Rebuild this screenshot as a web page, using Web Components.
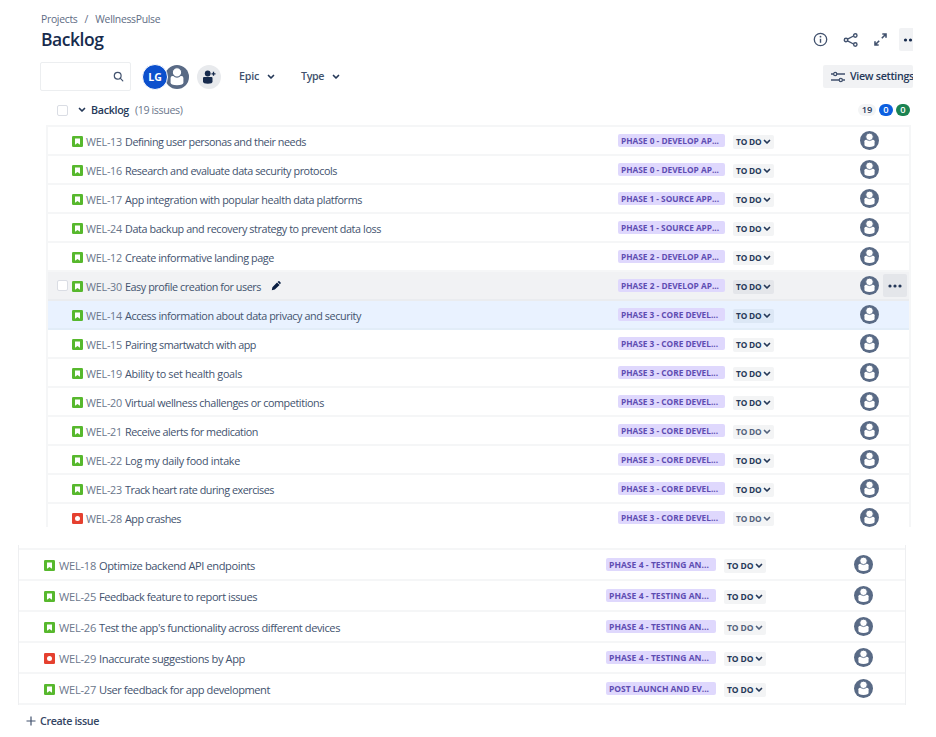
<!DOCTYPE html>
<html lang="en">
<head>
<meta charset="utf-8">
<title>Backlog</title>
<style>
html,body{margin:0;background:#fff}
body{width:936px;height:737px;overflow:hidden;font-family:"Open Sans","Noto Sans",sans-serif;color:#42526e}
</style>
</head>
<body>
<backlog-page></backlog-page>
<script>
const define=(name,html,after)=>{
  const t=document.createElement('template');
  t.innerHTML=html;
  customElements.define(name,class extends HTMLElement{
    connectedCallback(){
      if(this.shadowRoot)return;
      this.attachShadow({mode:'open'}).append(t.content.cloneNode(true));
      if(after)after(this,this.shadowRoot);
    }
  });
};

/* One line of text, tracked so that it fills the width given in "w". */
define('fit-text',`<style>:host{display:block;white-space:pre;flex:none}span{display:inline-block}</style><span><slot></slot></span>`,(el,r)=>{
  const s=r.querySelector('span'),w=+el.getAttribute('w');
  const n=el.textContent.length;
  el.style.width=w+'px';
  s.style.letterSpacing=((w-s.getBoundingClientRect().width)/n).toFixed(4)+'px';
});

define('user-avatar',`<style>:host{display:block;width:var(--s,19px);height:var(--s,19px);flex:none}svg{display:block;width:100%;height:100%}</style>
<svg viewBox="0 0 24 24"><circle cx="12" cy="12" r="12" fill="#596a85"/><path d="M5.600 13q0-1.900 1.900-1.900h9q1.900 0 1.900 1.900v4.500q0 2.700-6.400 2.700t-6.400-2.700z" fill="#fff"/><circle cx="12" cy="7.400" r="4.700" fill="#fff" stroke="#596a85" stroke-width="1.100"/></svg>`);

define('type-icon',`<style>:host{display:block;width:11px;height:11px;flex:none}svg{display:block}.b{display:none}:host([kind=bug]) .b{display:block}:host([kind=bug]) .s{display:none}</style>
<svg class="s" width="11" height="11" viewBox="0 0 11 11"><rect width="11" height="11" rx="1.300" fill="#57b82d"/><path d="M3 2.500h5v6.200L5.500 6.900 3 8.700z" fill="#fff"/></svg>
<svg class="b" width="11" height="11" viewBox="0 0 11 11"><rect width="11" height="11" rx="1.300" fill="#e5402f"/><circle cx="5.500" cy="5.500" r="2.500" fill="#fff"/></svg>`);

define('check-box',`<style>:host{display:block;box-sizing:border-box;width:11px;height:11px;border:1px solid #dadde4;border-radius:2px;background:#fff;flex:none}</style>`);

define('chevron-icon',`<style>:host{display:block;flex:none;width:8px;height:6px}svg{display:block}</style><svg width="8" height="6" viewBox="0 0 8 6"><path d="M1.500 1.500 4 4l2.500-2.500" fill="none" stroke="currentColor" stroke-width="1.700" stroke-linecap="round" stroke-linejoin="round"/></svg>`);

define('issue-row',`<style>
:host{display:flex;box-sizing:border-box;height:var(--row,29px);border-bottom:var(--line,2px) solid #f5f6f7;position:relative;font-size:var(--fs,10.800px);align-items:center}
:host([hover]){background:#f1f2f4;border-color:#eaecef}
:host([selected]){background:#e9f2ff;border-color:#e2edf8}
.sel{width:var(--lead,24px);display:flex;justify-content:flex-end;padding-right:4px;box-sizing:border-box;flex:none}
.main{display:flex;flex:1;align-items:center;min-width:0;padding-top:1px}
.main type-icon{margin-right:var(--ig,3px)}
.key{color:#6b778c;margin-right:3px}
svg{display:block}
.pen{margin-left:10px}
.epic{box-sizing:border-box;width:var(--ew,107px);height:13px;border-radius:2px;background:#dfd8fd;color:#5e4db2;font:700 var(--es,8.300px)/13px "Open Sans",sans-serif;padding-left:3px;flex:none;display:block}
.status{box-sizing:border-box;width:var(--sw,41px);height:14px;border-radius:2px;background:#f3f4f5;color:#253858;font:700 var(--es,8.300px)/14px "Open Sans",sans-serif;padding-left:3px;margin:2px 0 0 var(--sg,8px);display:flex;align-items:center;flex:none}
.status chevron-icon{margin-left:1px}
:host([hover]) .status{background:#e4e6ea}:host([selected]) .status{background:#dce7f5}
:host([muted]) .status{color:#52617b}
user-avatar{margin-left:var(--ag,86px)}
.tail{width:var(--tail,30px);flex:none;display:flex;padding-left:4px;box-sizing:border-box}
.more{width:24px;height:23px;border-radius:2px;background:#e4e6ea;display:flex;align-items:center;justify-content:center}
</style>
<div class="sel"></div><div class="main"></div><div class="epic"></div><div class="status"></div><user-avatar></user-avatar><div class="tail"></div>`,(el,r)=>{
  const a=n=>el.getAttribute(n),big=el.hasAttribute('big');
  const q=s=>r.querySelector(s);
  q('.main').innerHTML=`<type-icon kind="${a('kind')||'story'}"></type-icon><fit-text class="key" w="${big?37:36}">${a('key')}</fit-text><fit-text w="${a('w')}">${a('label')}</fit-text>`;
  q('.epic').innerHTML=`<fit-text w="${a('ew')}">${a('epic')}</fit-text>`;
  q('.status').innerHTML=`<fit-text w="${big?26.5:25.5}">TO DO</fit-text><chevron-icon></chevron-icon>`;
  if(el.hasAttribute('hover')){
    q('.sel').innerHTML='<check-box></check-box>';
    q('.main').insertAdjacentHTML('beforeend','<svg class="pen" width="10" height="10" viewBox="0 0 10 10"><path d="M.8 9.200l.6-3L6 1.400l2.600 2.600-4.800 4.600zM6.600 1l.8-.7q.5-.4 1 0l1.200 1.200q.4.5 0 1l-.7.8z" fill="#091e42"/></svg>');
    q('.tail').innerHTML='<div class="more"><svg width="14" height="4"><g fill="#253858"><circle cx="2" cy="2" r="1.600"/><circle cx="7" cy="2" r="1.600"/><circle cx="12" cy="2" r="1.600"/></g></svg></div>';
  }
});

define('issue-list',`<style>
:host{display:block;box-sizing:border-box;width:865px;height:402px;margin-left:46px;overflow:hidden;border:2px solid #f5f6f7;border-bottom:0}
:host([second]){width:888px;height:160px;margin:18px 0 0 18px;border-width:0 1px;border-color:#eeeff1;--row:31px;--line:2px;--lead:25px;--ig:4px;--fs:11.100px;--ew:110px;--es:8.500px;--sw:42px;--ag:88px;--tail:32px}
.top{display:none}:host([second]) .top{display:block;height:3px;border-bottom:2px solid #f5f6f7}
</style><div class="top"></div><slot></slot>`);

define('page-header',`<style>
:host{display:block;width:913px;height:99px;overflow:hidden}
.crumbs{display:flex;font-size:10.400px;line-height:14px;padding:12px 0 0 41px;color:#5e6c84}
.title{display:flex;height:27px;padding-left:41px;align-items:center;font:600 17.500px/27px "Open Sans",sans-serif;color:#172b4d}
.actions{margin-left:auto;display:flex;align-items:center}
.bar{display:flex;align-items:center;height:47px;padding-left:40px;font:600 10.700px/15px "Open Sans",sans-serif}
.bar chevron-icon{color:#253858}
svg{display:block;flex:none}
.search{box-sizing:border-box;width:91px;height:29px;border:1px solid #eceef0;border-radius:2px;display:flex;align-items:center;justify-content:flex-end;padding-right:6px}
.me{box-sizing:border-box;width:26px;height:26px;border-radius:50%;background:#0c50cd;color:#fff;font:700 10.500px/24px "Open Sans",sans-serif;text-align:center;margin-left:11px;border:1px solid #fff;position:relative;z-index:1}
.av{--s:24px;margin-left:-3px}
.add{width:24px;height:24px;border-radius:50%;background:#e8eaed;margin-left:8px;display:grid;place-items:center}
.more{width:14px;height:23px;background:#f1f2f4;margin-left:12px;padding-left:4px;box-sizing:border-box;display:flex;align-items:center;border-radius:2px 0 0 2px;overflow:hidden}
.view{margin-left:auto;width:90px;height:23px;background:#f1f2f4;border-radius:2px;display:flex;align-items:center;padding-left:8px;box-sizing:border-box;color:#253858;overflow:hidden}
</style>
<div class="crumbs"><fit-text w="36.500">Projects</fit-text><span style="margin:0 7px">/</span><fit-text w="65">WellnessPulse</fit-text></div>
<div class="title"><fit-text w="62.500">Backlog</fit-text><div class="actions">
<svg width="15" height="15" viewBox="0 0 15 15"><circle cx="7.500" cy="7.500" r="6.200" fill="none" stroke="#42526e" stroke-width="1.300"/><circle cx="7.500" cy="4.700" r=".9" fill="#42526e"/><path d="M7.500 6.800v4" stroke="#42526e" stroke-width="1.400"/></svg>
<svg style="margin-left:15px" width="16" height="14" viewBox="0 0 16 14" fill="none" stroke="#42526e" stroke-width="1.400"><path d="M4.500 6.200 10.500 3M4.500 7.800 10.500 11"/><circle cx="3" cy="7" r="1.700"/><circle cx="12.300" cy="2.500" r="1.700"/><circle cx="12.300" cy="11.500" r="1.700"/></svg>
<svg style="margin-left:15px" width="13" height="13" viewBox="0 0 13 13" fill="none" stroke="#42526e" stroke-width="1.600"><path d="M7.800 5.200 12 1M8.300 1H12v3.700M5.200 7.800 1 12M1 8.300V12h3.700"/></svg>
<div class="more"><svg width="14" height="4"><g fill="#172b4d"><circle cx="2.500" cy="2" r="1.600"/><circle cx="7.500" cy="2" r="1.600"/></g></svg></div></div></div>
<div class="bar"><div class="search"><svg width="11" height="11" viewBox="0 0 11 11" fill="none" stroke="#42526e" stroke-width="1.200"><circle cx="4.700" cy="4.700" r="3.400"/><path d="m7.200 7.200 2.600 2.600" stroke-linecap="round"/></svg></div>
<div class="me">LG</div><user-avatar class="av"></user-avatar>
<div class="add"><svg width="14" height="14" viewBox="0 0 14 14" fill="#172b4d"><circle cx="5.700" cy="3.500" r="2.900"/><path d="M1 8q0-1 1-1h7.500q1 0 1 1v3.500q0 2.200-4.700 2.200T1 11.500z"/><path d="M11.500 1.800v4M9.500 3.800h4" stroke="#172b4d" stroke-width="1.300"/></svg></div>
<fit-text w="20" style="margin-left:18px">Epic</fit-text><chevron-icon style="margin-left:8px"></chevron-icon>
<fit-text w="23" style="margin-left:26px">Type</fit-text><chevron-icon style="margin-left:8px"></chevron-icon>
<div class="view"><svg width="14" height="12" viewBox="0 0 14 12" fill="none" stroke="#42526e" stroke-width="1.300"><path d="M0 3h2.500M6 3h8M0 9h8M11.500 9H14"/><circle cx="4.200" cy="3" r="1.600"/><circle cx="9.800" cy="9" r="1.600"/></svg><fit-text w="64" style="margin-left:5px">View settings</fit-text></div></div>`);

define('section-header',`<style>
:host{display:flex;height:26px;align-items:center;padding:0 26px 4px 57px;font-size:10.700px;box-sizing:border-box}
b{display:block;font-weight:600;color:#253858}
chevron-icon{color:#253858}
.c{margin-left:6px;color:#6b778c}
.p{height:12px;border-radius:6px;font:600 9.300px/12px "Open Sans",sans-serif;text-align:center;width:14px;margin-left:3px;color:#fff}
</style><check-box></check-box><chevron-icon style="margin-left:10px"></chevron-icon>
<b style="margin-left:5px"><fit-text w="38">Backlog</fit-text></b><fit-text class="c" w="47.500">(19 issues)</fit-text>
<div class="p" style="margin-left:auto;width:18px;background:#f3f4f5;color:#253858">19</div><div class="p" style="background:#0c5fe0">0</div><div class="p" style="background:#1b8352">0</div>`);

define('create-issue',`<style>:host{display:flex;align-items:center;margin:8px 0 0 26px;font:600 10.700px/16px "Open Sans",sans-serif;color:#344563}svg{display:block;margin-right:4px}</style>
<svg width="10" height="10" viewBox="0 0 10 10"><path d="M5 .5v9M.5 5h9" stroke="#42526e" stroke-width="1.200"/></svg><fit-text w="59">Create issue</fit-text>`);

define('backlog-page',`<style>:host{display:block;width:936px}</style>
<page-header></page-header><section-header></section-header><issue-list id="a"></issue-list><issue-list id="b" second></issue-list><create-issue></create-issue>`,(el,r)=>{
  const D=['DEVELOP AP...',98],S=['SOURCE APP...',98],C=['CORE DEVEL...',97];
  const A=[[13,'Defining user personas and their needs',181,0,D],[16,'Research and evaluate data security protocols',212,0,D],[17,'App integration with popular health data platforms',237,1,S],[24,'Data backup and recovery strategy to prevent data loss',256,1,S],[12,'Create informative landing page',149,2,D],[30,'Easy profile creation for users',136,2,D,'hover'],[14,'Access information about data privacy and security',236,3,C,'selected'],[15,'Pairing smartwatch with app',131,3,C],[19,'Ability to set health goals',117,3,C],[20,'Virtual wellness challenges or competitions',199,3,C],[21,'Receive alerts for medication',133,3,C,'muted'],[22,'Log my daily food intake',115,3,C],[23,'Track heart rate during exercises',149,3,C],[28,'App crashes',56,3,C,'muted kind="bug"']];
  const T='PHASE 4 - TESTING AN...',B=[[18,'Optimize backend API endpoints',156,T],[25,'Feedback feature to report issues',158,T],[26,"Test the app's functionality across different devices",241,T,'muted'],[29,'Inaccurate suggestions by App',146,T,'kind="bug"'],[27,'User feedback for app development',171,'POST LAUNCH AND EV...']];
  r.getElementById('a').innerHTML=A.map(([k,t,w,p,e,x=''])=>`<issue-row key="WEL-${k}" label="${t}" w="${w}" epic="PHASE ${p} - ${e[0]}" ew="${e[1]}" ${x}></issue-row>`).join('');
  r.getElementById('b').innerHTML=B.map(([k,t,w,e,x=''])=>`<issue-row big key="WEL-${k}" label="${t}" w="${w}" epic="${e}" ew="100" ${x}></issue-row>`).join('');
});
</script>
</body>
</html>
